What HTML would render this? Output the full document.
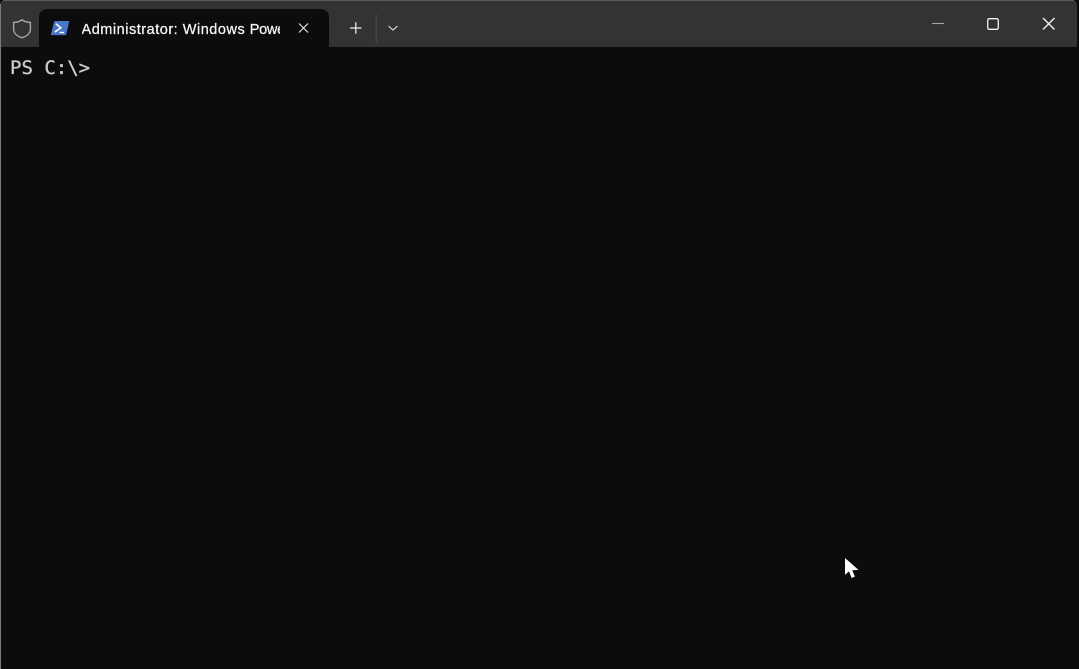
<!DOCTYPE html>
<html>
<head>
<meta charset="utf-8">
<style>
html,body{margin:0;padding:0;width:1079px;height:669px;overflow:hidden;background:#0c0c0c;}
.abs{position:absolute;}
#bar{left:0;top:0;width:1077px;height:47px;background:#333333;border-radius:5px 5px 0 0;}
#top{left:3px;top:0;width:1071px;height:1px;background:#5c5c5c;}
#left{left:0;top:4px;width:1px;height:665px;background:#7a7a7a;}
#tab{left:39px;top:9px;width:290px;height:38px;background:#0c0c0c;border-radius:8px 8px 0 0;}
#title{left:81.5px;top:20px;width:198px;height:20px;overflow:hidden;white-space:nowrap;color:#f6f6f6;font:14.5px/20px "Liberation Sans",sans-serif;letter-spacing:.52px;-webkit-text-stroke:.25px #f6f6f6;}
#title span{letter-spacing:-.3px;}
#prompt{left:10px;top:57px;color:#cccccc;font:19px/22px "DejaVu Sans Mono","Liberation Mono",monospace;white-space:pre;-webkit-text-stroke:.3px #cccccc;}
svg{position:absolute;left:0;top:0;}
</style>
</head>
<body>
<div class="abs" id="bar"></div>
<div class="abs" id="top"></div>
<div class="abs" id="left"></div>
<div class="abs" id="tab"></div>
<div class="abs" id="title">Administrator: Windows <span>PowerShell</span></div>
<div class="abs" id="prompt">PS C:\&gt;</div>
<svg width="1079" height="669" viewBox="0 0 1079 669">
  <path d="M329 47h5a3 3 0 0 1-5-4z" fill="#0c0c0c"/>
  <path d="M22 19.800c2.400 1.900 5.300 2.500 8.400 2.700v6.500c0 4.300-3.500 7.300-8.400 8.700-4.900-1.400-8.400-4.400-8.400-8.700v-6.500c3.100-.2 6-.8 8.400-2.700z" fill="none" stroke="#a8a8a8" stroke-width="1.400"/>
  <path d="M55.200 21h13.100a.8.800 0 0 1 .8 1l-2.800 12.300a1 1 0 0 1-1 .8h-13.500a.8.800 0 0 1-.8-1l3.200-12.300a1 1 0 0 1 1-.8z" fill="#4a76c9"/>
  <path d="M55.800 23.800l5 4-6 4.300" fill="none" stroke="#fff" stroke-width="1.600"/>
  <path d="M59.500 32.500h4.500" stroke="#fff" stroke-width="1.400"/>
  <path d="M299 23.500l9 9M308 23.500l-9 9" stroke="#ececec" stroke-width="1.100"/>
  <path d="M350 28h11.500M355.800 22.200v11.500" stroke="#f0f0f0" stroke-width="1.200"/>
  <rect x="375.500" y="14" width="1.300" height="29" fill="#464646"/>
  <path d="M388.500 26l4.500 4 4.500-4" fill="none" stroke="#e0e0e0" stroke-width="1.100"/>
  <path d="M932 23.500h12" stroke="#a6a6a6" stroke-width="1.100"/>
  <rect x="987.700" y="18.700" width="10.600" height="10.600" rx="1.500" fill="none" stroke="#f0f0f0" stroke-width="1.300"/>
  <path d="M1043 18l11.500 11.500M1054.500 18l-11.500 11.500" stroke="#f5f5f5" stroke-width="1.300"/>
  <path d="M845 558v16.800l4-3.400 2.600 6.600 3.300-1.400-2.700-6.400 6.300-.3z" fill="#ffffff"/>
</svg>
</body>
</html>
